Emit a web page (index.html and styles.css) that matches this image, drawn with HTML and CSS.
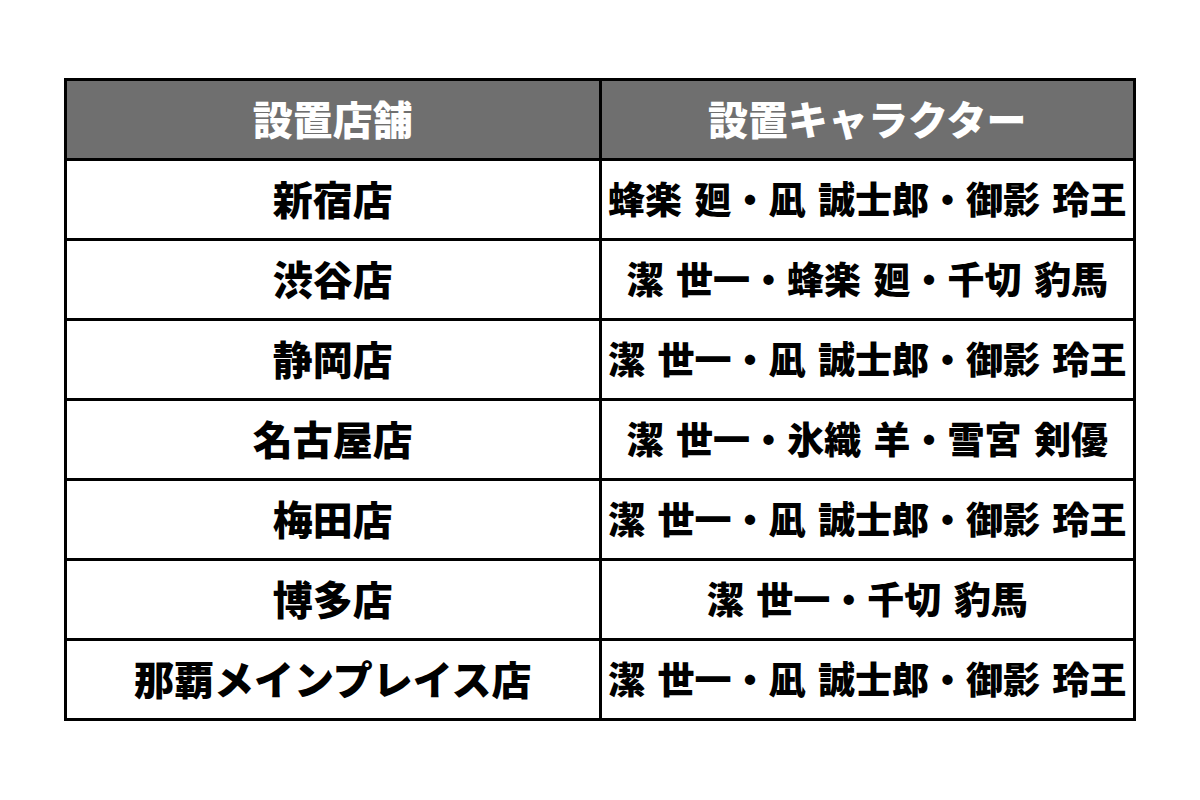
FILE: index.html
```html
<!DOCTYPE html>
<html lang="ja">
<head>
<meta charset="utf-8">
<title>設置店舗</title>
<link rel="stylesheet" href="styles.css">
</head>
<body>
<table class="shop-table">
  <thead>
    <tr>
      <th class="col-shop">設置店舗</th>
      <th class="col-chara">設置キャラクター</th>
    </tr>
  </thead>
  <tbody>
    <tr><td class="shop">新宿店</td><td class="chara">蜂楽 廻・凪 誠士郎・御影 玲王</td></tr>
    <tr><td class="shop">渋谷店</td><td class="chara">潔 世一・蜂楽 廻・千切 豹馬</td></tr>
    <tr><td class="shop">静岡店</td><td class="chara">潔 世一・凪 誠士郎・御影 玲王</td></tr>
    <tr><td class="shop">名古屋店</td><td class="chara">潔 世一・氷織 羊・雪宮 剣優</td></tr>
    <tr><td class="shop">梅田店</td><td class="chara">潔 世一・凪 誠士郎・御影 玲王</td></tr>
    <tr><td class="shop">博多店</td><td class="chara">潔 世一・千切 豹馬</td></tr>
    <tr><td class="shop">那覇メインプレイス店</td><td class="chara">潔 世一・凪 誠士郎・御影 玲王</td></tr>
  </tbody>
</table>
</body>
</html>
```

FILE: styles.css
```css
html, body {
  margin: 0;
  padding: 0;
  background: #ffffff;
}

body {
  padding: 78px 0 0 64px;
  font-family: "Noto Sans CJK JP", "Noto Sans", sans-serif;
  font-weight: 900;
}

.shop-table {
  border-collapse: collapse;
  width: 1072px;
  table-layout: fixed;
}

.shop-table th,
.shop-table td {
  border: 3px solid #000;
  height: 74px;
  padding: 0 0 3px 0;
  text-align: center;
  vertical-align: middle;
  line-height: 1;
  white-space: nowrap;
}

.shop-table th {
  background: #6f6f6f;
  color: #ffffff;
  font-size: 40px;
  font-weight: 900;
}

.col-shop,
.col-chara {
  width: 50%;
}

.shop {
  font-size: 40px;
  color: #000;
}

.chara {
  font-size: 37px;
  color: #000;
  word-spacing: 4px;
}
```
